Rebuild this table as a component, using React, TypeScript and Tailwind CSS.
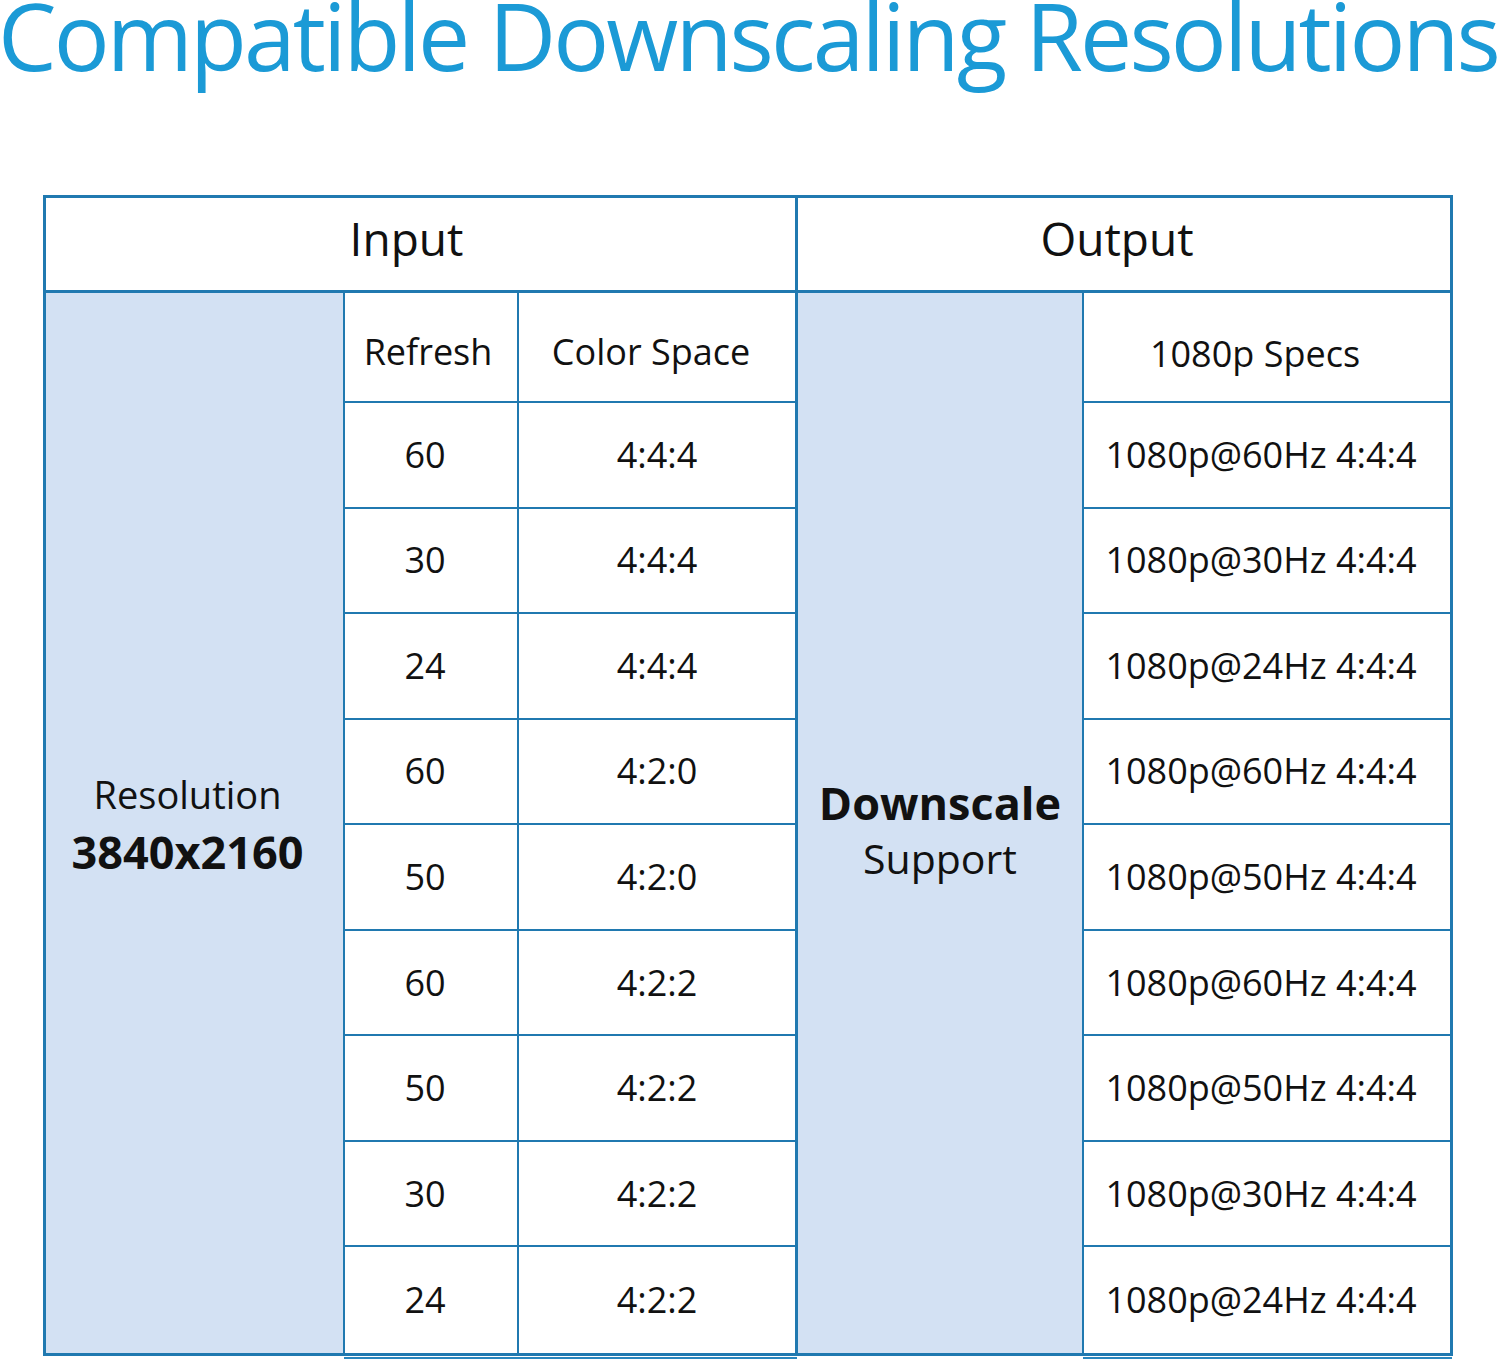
import React from 'react'

const rows: [string, string, string][] = [
  ['60', '4:4:4', '1080p@60Hz 4:4:4'],
  ['30', '4:4:4', '1080p@30Hz 4:4:4'],
  ['24', '4:4:4', '1080p@24Hz 4:4:4'],
  ['60', '4:2:0', '1080p@60Hz 4:4:4'],
  ['50', '4:2:0', '1080p@50Hz 4:4:4'],
  ['60', '4:2:2', '1080p@60Hz 4:4:4'],
  ['50', '4:2:2', '1080p@50Hz 4:4:4'],
  ['30', '4:2:2', '1080p@30Hz 4:4:4'],
  ['24', '4:2:2', '1080p@24Hz 4:4:4'],
]

export default function App() {
  const font = { fontFamily: '"Open Sans", "Noto Sans", sans-serif' }
  return (
    <div className="w-[1500px] h-[1362px] bg-white overflow-hidden text-[#111]" style={font}>
      <h1 className="text-[93px] leading-[71px] text-[#1b9ad6] whitespace-nowrap -ml-[2px] tracking-[-2.9px]">
        Compatible Downscaling Resolutions
      </h1>

      <div className="ml-[43px] mt-[124px] w-[1410px] border-[3px] border-[#2079b0]">
        {/* header: Input / Output */}
        <div className="grid grid-cols-[752px_1fr] h-[95px] border-b-[3px] border-[#2079b0] text-[46px]">
          <div className="flex items-center justify-center pr-[28px] pb-[12px] border-r-[3px] border-[#2079b0]">Input</div>
          <div className="flex items-center justify-center pr-[14px] pb-[12px]">Output</div>
        </div>

        {/* body */}
        <div className="grid grid-cols-[299px_174px_279px_286px_366px] grid-rows-[110px_repeat(9,1fr)] h-[1060px] text-[36px]">
          <div className="row-span-10 col-start-1 row-start-1 bg-[#d3e1f3] border-r-2 border-[#2079b0] flex flex-col items-center justify-center pr-[14px] pt-[14px]">
            <span className="text-[38px] leading-[44px]">Resolution</span>
            <span className="text-[45px] font-bold leading-[72px]">3840x2160</span>
          </div>

          <div className="col-start-2 row-start-1 border-r-2 border-b-2 border-[#2079b0] flex items-center justify-center pr-[6px] pt-[10px]">Refresh</div>
          <div className="col-start-3 row-start-1 border-r-[3px] border-b-2 border-[#2079b0] flex items-center justify-center pr-[12px] pt-[10px]">Color Space</div>

          <div className="row-span-10 col-start-4 row-start-1 bg-[#d3e1f3] border-r-2 border-[#2079b0] flex flex-col items-center justify-center pt-[14px]">
            <span className="text-[45px] font-bold leading-[56px]">Downscale</span>
            <span className="text-[41px] leading-[54px]">Support</span>
          </div>

          <div className="col-start-5 row-start-1 border-b-2 border-[#2079b0] flex items-center justify-center pr-[24px] pt-[14px]">1080p Specs</div>

          {rows.map(([hz, cs, spec], i) => {
            const last = i === rows.length - 1
            const b = last ? '' : 'border-b-2'
            return (
              <React.Fragment key={i}>
                <div className={`col-start-2 border-r-2 ${b} border-[#2079b0] flex items-center justify-center pr-[12px]`}>{hz}</div>
                <div className={`col-start-3 border-r-[3px] ${b} border-[#2079b0] flex items-center justify-center`}>{cs}</div>
                <div className={`col-start-5 ${b} border-[#2079b0] flex items-center justify-center pr-[12px]`}>{spec}</div>
              </React.Fragment>
            )
          })}
        </div>
      </div>

      {/* thin underline below the white columns */}
      <div className="flex mt-[1px] ml-[344px]">
        <div className="w-[453px] h-[2px] bg-[#2a86bd]" />
        <div className="w-[286px]" />
        <div className="w-[369px] h-[2px] bg-[#2a86bd]" />
      </div>
    </div>
  )
}
